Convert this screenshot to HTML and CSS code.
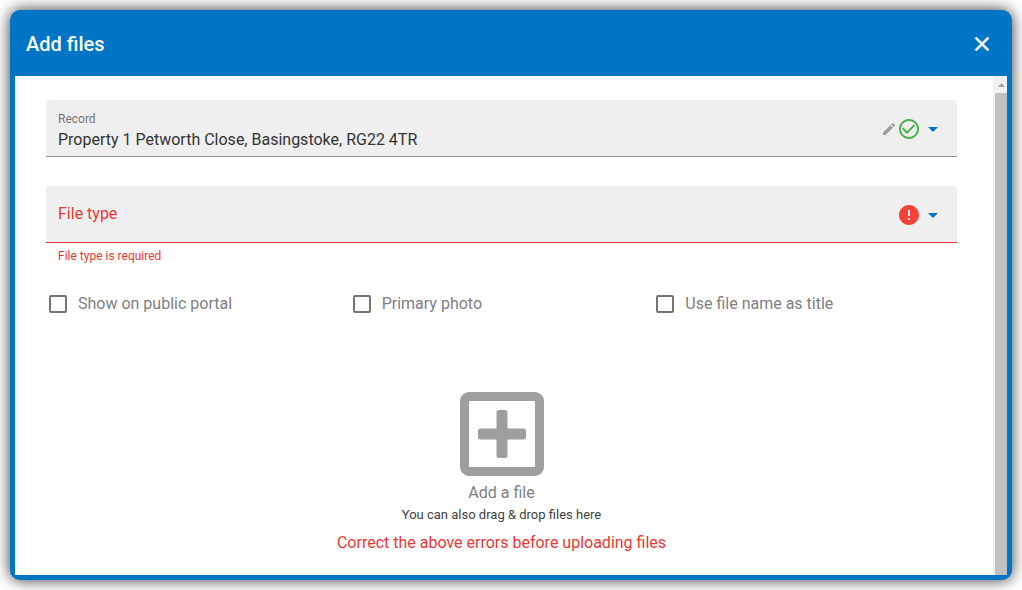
FILE: index.html
```html
<!DOCTYPE html>
<html lang="en">
<head>
<meta charset="utf-8">
<meta name="viewport" content="width=device-width, initial-scale=1">
<title>Add files</title>
<link rel="stylesheet" href="styles.css">
</head>
<body>
<section class="dialog" role="dialog" aria-labelledby="dialog-title">
  <header class="dialog-header">
    <h1 class="dialog-title" id="dialog-title">Add files</h1>
    <button class="icon-button close-button" type="button" aria-label="Close">
      <svg width="24" height="24" viewBox="0 0 24 24" fill="currentColor"><path d="M19 6.41 17.59 5 12 10.59 6.41 5 5 6.41 10.59 12 5 17.59 6.41 19 12 13.41 17.59 19 19 17.59 13.41 12z" stroke="currentColor" stroke-width=".6"/></svg>
    </button>
  </header>
  <div class="dialog-body">
    <form class="form">
      <div class="field">
        <div class="field-main">
          <label class="field-label" for="record">Record</label>
          <select class="field-select" id="record">
            <option>Property 1 Petworth Close, Basingstoke, RG22 4TR</option>
          </select>
        </div>
        <div class="field-icons">
          <button class="icon-button edit-button" type="button" aria-label="Edit record">
            <svg width="16" height="16" viewBox="0 0 24 24" fill="currentColor"><path d="M3 17.25V21h3.75L17.81 9.94l-3.75-3.75L3 17.25zM20.71 7.04a1 1 0 0 0 0-1.41l-2.34-2.34a1 1 0 0 0-1.41 0l-1.83 1.83 3.75 3.75 1.83-1.83z"/></svg>
          </button>
          <svg class="valid-icon" width="24" height="24" viewBox="0 0 24 24" fill="currentColor"><path d="M16.59 7.58 10 14.17l-3.59-3.58L5 12l5 5 8-8-1.41-1.42zM12 2C6.48 2 2 6.48 2 12s4.48 10 10 10 10-4.48 10-10S17.52 2 12 2zm0 18c-4.42 0-8-3.58-8-8s3.58-8 8-8 8 3.58 8 8-3.58 8-8 8z"/></svg>
          <svg class="arrow-icon" width="24" height="24" viewBox="0 0 24 24" fill="currentColor"><path d="m7 10 5 5 5-5z"/></svg>
        </div>
      </div>

      <div class="field field-invalid">
        <div class="field-main field-empty">
          <label class="field-label" for="file-type">File type</label>
          <select class="field-select" id="file-type" aria-describedby="file-type-error" aria-invalid="true">
            <option value=""></option>
          </select>
        </div>
        <div class="field-icons">
          <svg class="error-icon" width="24" height="24" viewBox="0 0 24 24" fill="currentColor"><path d="M12 2C6.48 2 2 6.48 2 12s4.48 10 10 10 10-4.48 10-10S17.52 2 12 2zm1 15h-2v-2h2v2zm0-4h-2V7h2v6z"/></svg>
          <svg class="arrow-icon" width="24" height="24" viewBox="0 0 24 24" fill="currentColor"><path d="m7 10 5 5 5-5z"/></svg>
        </div>
      </div>
      <p class="field-error" id="file-type-error">File type is required</p>

      <div class="options">
        <label class="option"><input class="checkbox" type="checkbox">Show on public portal</label>
        <label class="option"><input class="checkbox" type="checkbox">Primary photo</label>
        <label class="option"><input class="checkbox" type="checkbox">Use file name as title</label>
      </div>

      <div class="upload">
        <button class="upload-button" type="button">
          <svg width="84" height="84" viewBox="0 0 84 84" fill="currentColor"><path fill-rule="evenodd" d="M9 0h66a9 9 0 0 1 9 9v66a9 9 0 0 1-9 9H9a9 9 0 0 1-9-9V9a9 9 0 0 1 9-9zm1 9a1 1 0 0 0-1 1v64a1 1 0 0 0 1 1h64a1 1 0 0 0 1-1V10a1 1 0 0 0-1-1z"/><rect x="36.5" y="18" width="11" height="48" rx="2.5"/><rect x="18" y="36.500" width="48" height="11" rx="2.5"/></svg>
          <span>Add a file</span>
        </button>
        <p class="upload-hint">You can also drag &amp; drop files here</p>
        <p class="upload-error">Correct the above errors before uploading files</p>
      </div>
    </form>
    <div class="scrollbar" aria-hidden="true">
      <svg class="scroll-up" width="14" height="17" viewBox="0 0 14 17"><path d="M5 11 8.500 7 12 11z" fill="#a3a3a3"/></svg>
      <div class="scroll-thumb"></div>
    </div>
  </div>
</section>
</body>
</html>
```

FILE: styles.css
```css
* {
  box-sizing: border-box;
}

body {
  margin: 0;
  padding: 10px;
  min-height: 100vh;
  display: flex;
  background: #fff;
  font-family: Roboto, "Liberation Sans", sans-serif;
  font-size: 16px;
  line-height: 24px;
  color: #424242;
}

h1,
p {
  margin: 0;
}

svg {
  display: block;
}

button {
  padding: 0;
  border: 0;
  background: none;
  font: inherit;
  cursor: pointer;
}

.dialog {
  flex: 1;
  min-width: 0;
  display: flex;
  flex-direction: column;
  padding: 0 5px 5px;
  border-radius: 10px;
  background: #0075c5;
  box-shadow: 0 0 15px rgba(0, 0, 0, 0.8);
}

.dialog-header {
  display: flex;
  align-items: center;
  justify-content: space-between;
  height: 66px;
  padding: 2px 13px 0 11px;
  color: #fff;
}

.dialog-title {
  font-size: 20px;
  font-weight: 500;
}

.close-button {
  color: #fff;
}

.dialog-body {
  flex: 1;
  display: flex;
  background: #fff;
}

.form {
  flex: 1;
  min-width: 0;
  padding: 24px 36px 20px 31px;
}

.field {
  display: flex;
  align-items: center;
  height: 57px;
  padding: 2px 12px 0;
  border-bottom: 1px solid #8e8e8e;
  border-radius: 4px 4px 0 0;
  background: #efefef;
}

.field-main {
  flex: 1;
  min-width: 0;
  display: flex;
  flex-direction: column;
  padding-top: 5px;
}

.field-label {
  font-size: 12px;
  line-height: 16px;
  color: #757575;
}

.field-select {
  appearance: none;
  width: 100%;
  height: 26px;
  padding: 0;
  border: 0;
  background: transparent;
  font: inherit;
  color: #333;
}

.field-icons {
  display: flex;
  align-items: center;
}

.edit-button {
  color: #9e9e9e;
}

.valid-icon {
  color: #4caf50;
}

.error-icon {
  color: #f44336;
}

.arrow-icon {
  color: #0075c5;
}

.field-invalid {
  margin-top: 29px;
  border-bottom-color: #e53935;
}

.field-empty {
  display: grid;
  padding-top: 0;
}

.field-empty > * {
  grid-area: 1 / 1;
}

.field-empty .field-label {
  font-size: 16px;
  line-height: 24px;
  padding-bottom: 2px;
  color: #e53935;
}

.field-error {
  padding: 5px 12px 0;
  font-size: 12px;
  line-height: 16px;
  color: #e53935;
}

.options {
  display: grid;
  grid-template-columns: repeat(3, 1fr);
  margin-top: 28px;
}

.option {
  display: flex;
  align-items: center;
  gap: 11px;
  padding-left: 3px;
  color: #808080;
}

.checkbox {
  appearance: none;
  flex: none;
  width: 18px;
  height: 18px;
  margin: 0;
  border: 2px solid #757575;
  border-radius: 2px;
}

.upload {
  display: flex;
  flex-direction: column;
  align-items: center;
  margin-top: 76px;
  text-align: center;
}

.upload-button {
  display: flex;
  flex-direction: column;
  align-items: center;
  gap: 5px;
  color: #9e9e9e;
}

.upload-button span {
  color: #808080;
}

.upload-hint {
  font-size: 13px;
  line-height: 20px;
}

.upload-error {
  margin-top: 6px;
  color: #e53935;
}

.scrollbar {
  display: flex;
  flex-direction: column;
  width: 14px;
  background: #f1f1f1;
}

.scroll-thumb {
  flex: 1;
  margin-left: 2px;
  background: #c1c1c1;
}
```
